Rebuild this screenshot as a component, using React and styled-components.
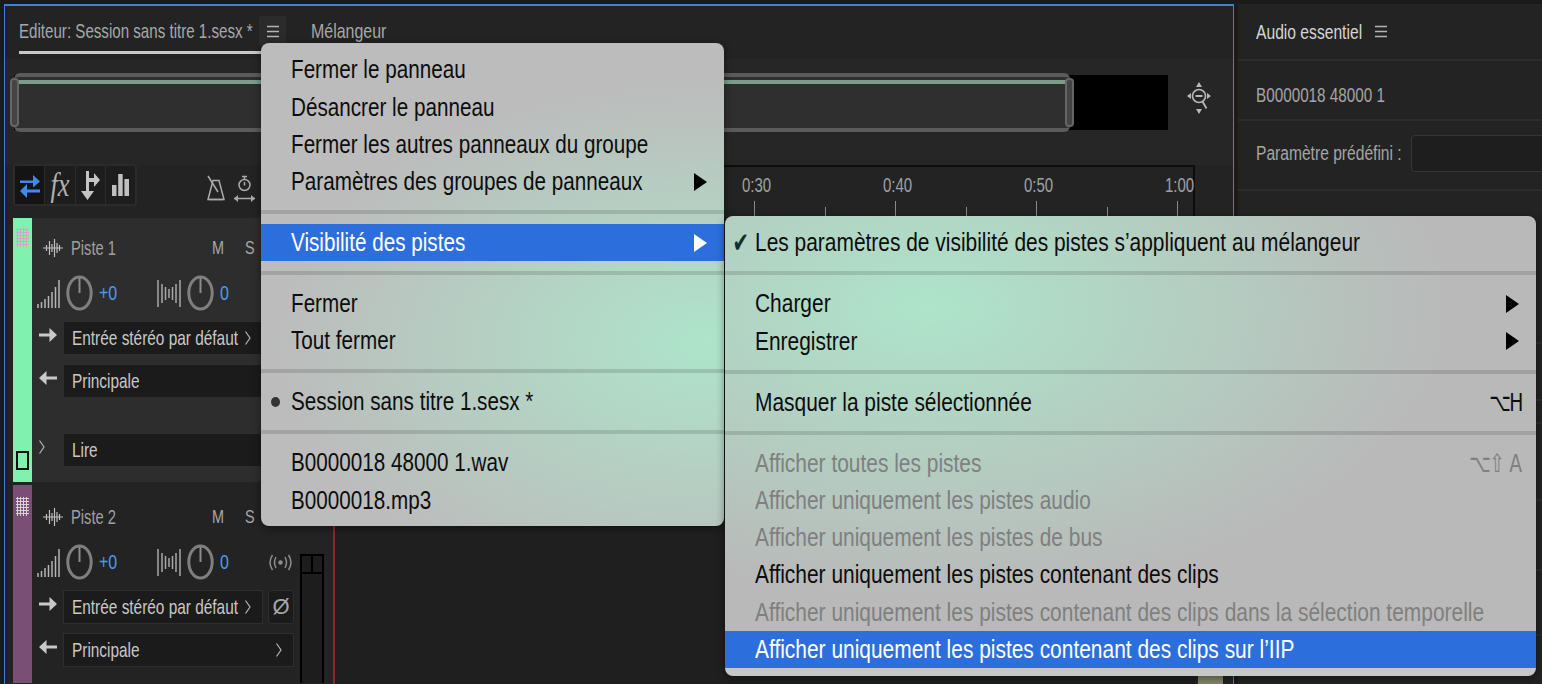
import styled, { createGlobalStyle, css } from "styled-components"

const GlobalStyle = createGlobalStyle`
  html, body {
    margin: 0;
    padding: 0;
    background: #1b1b1b;
  }
  body {
    font-family: "Liberation Sans", Arial, sans-serif;
    overflow: hidden;
  }
`

// the screenshot is squeezed horizontally, so all the text is too
const squeezed = css`
  display: inline-block;
  white-space: nowrap;
  transform-origin: left center;
  transform: scaleX(${(props) => props.$scale || 0.8});
`

const mainItems = [
  { label: "Fermer le panneau" },
  { label: "Désancrer le panneau" },
  { label: "Fermer les autres panneaux du groupe" },
  { label: "Paramètres des groupes de panneaux", arrow: true },
  { separator: true },
  { label: "Visibilité des pistes", arrow: true, active: true },
  { separator: true },
  { label: "Fermer" },
  { label: "Tout fermer" },
  { separator: true },
  { label: "Session sans titre 1.sesx *", bullet: true },
  { separator: true },
  { label: "B0000018 48000 1.wav" },
  { label: "B0000018.mp3" },
]

const subItems = [
  { label: "Les paramètres de visibilité des pistes s’appliquent au mélangeur", check: true },
  { separator: true },
  { label: "Charger", arrow: true },
  { label: "Enregistrer", arrow: true },
  { separator: true },
  { label: "Masquer la piste sélectionnée", shortcut: "⌥H" },
  { separator: true },
  { label: "Afficher toutes les pistes", disabled: true, shortcut: "⌥⇧A" },
  { label: "Afficher uniquement les pistes audio", disabled: true },
  { label: "Afficher uniquement les pistes de bus", disabled: true },
  { label: "Afficher uniquement les pistes contenant des clips" },
  { label: "Afficher uniquement les pistes contenant des clips dans la sélection temporelle", disabled: true },
  { label: "Afficher uniquement les pistes contenant des clips sur l’IIP", active: true },
]

const rulerMarks = ["0:30", "0:40", "0:50", "1:00"]
const sideRowHeights = [153, 57, 23, 77, 70, 65]

function HamburgerIcon() {
  return (
    <svg width="12" height="13" viewBox="0 0 12 13">
      <path d="M0 1.500h12M0 6.500h12M0 11.500h12" stroke="#b4b4b4" strokeWidth="1.500" />
    </svg>
  )
}

function SwapIcon() {
  return (
    <svg width="22" height="26" viewBox="0 0 22 26">
      <path d="M1 8.500h13V3l7 6.500-7 6V11H1zM21 17.500H8V12l-7 7 7 7v-5.500h13z" fill="#3d8bec" />
    </svg>
  )
}

function RouteIcon() {
  return (
    <svg width="20" height="29" viewBox="0 0 20 29">
      <path d="M6 0h3v20h5l-6.500 9L1 20h5zM9 7h5V2l6 7-6 7v-5H9z" fill="#c4c4c4" />
    </svg>
  )
}

function BarsIcon() {
  return (
    <svg width="17" height="22" viewBox="0 0 17 22">
      <path d="M0 11h4.500v11H0zM6.200 0h4.500v22H6.200zM12.400 5H17v17h-4.600z" fill="#c0c0c0" />
    </svg>
  )
}

function MetronomeIcon() {
  return (
    <svg width="18" height="26" viewBox="0 0 18 26">
      <path d="M6 5.500h6l5 19H1z" fill="none" stroke="#aaa" strokeWidth="1.500" />
      <path d="M1 1l10 16M2 24.500h14" stroke="#aaa" strokeWidth="1.500" />
    </svg>
  )
}

function TimerIcon() {
  return (
    <svg width="21" height="28" viewBox="0 0 21 28">
      <circle cx="10.500" cy="10" r="5.500" fill="none" stroke="#aaa" strokeWidth="1.500" />
      <path d="M8 1.500h5M10.500 2v2.500M10.500 7v3.500M0 23.500h21" stroke="#aaa" strokeWidth="1.500" />
      <path d="M0 23.500l4-3.500v7zM21 23.500l-4-3.500v7z" fill="#aaa" />
    </svg>
  )
}

function ZoomIcon() {
  return (
    <svg width="26" height="34" viewBox="0 0 26 34">
      <circle cx="13" cy="15" r="6.500" fill="none" stroke="#b8b8b8" strokeWidth="1.600" />
      <path d="M9.500 15h7M16.500 20.500l4 7" stroke="#b8b8b8" strokeWidth="1.800" />
      <path d="M13 1l3 5h-6zM1 15l4-3v6zM25 15l-4-3v6zM10 28h6l-3 5z" fill="#b8b8b8" />
    </svg>
  )
}

function WaveIcon() {
  return (
    <svg width="20" height="20" viewBox="0 0 20 20">
      <path
        d="M0 10h20M3.500 7v6M6.500 3v14M9 6v8M11.500 1v18M14 5v10M16.500 7v6"
        stroke="#c0c0c0"
        strokeWidth="1.200"
      />
    </svg>
  )
}

function GainIcon() {
  return (
    <svg width="23" height="29" viewBox="0 0 23 29">
      <path
        d="M1 29v-4M4.500 29v-6M8 29v-9M11.500 29v-12M15 29v-16M18.500 29V8M22 29V1"
        stroke="#b5b5b5"
        strokeWidth="1.500"
      />
    </svg>
  )
}

function PanIcon() {
  return (
    <svg width="24" height="27" viewBox="0 0 24 27">
      <path
        d="M1 0v27M5 4v19M8.500 7v13M12 9v9M15.500 7v13M19 4v19M23 0v27"
        stroke="#a8a8a8"
        strokeWidth="1.500"
      />
    </svg>
  )
}

function KnobIcon() {
  return (
    <svg width="27" height="36" viewBox="0 0 27 36">
      <ellipse cx="13.500" cy="18" rx="11.700" ry="16" fill="none" stroke="#7f7f7f" strokeWidth="3" />
      <path d="M13.500 3v15" stroke="#8c8c8c" strokeWidth="2" />
    </svg>
  )
}

function ArrowIcon({ left }) {
  return (
    <svg width="18" height="16" viewBox="0 0 18 16" style={left ? { transform: "scaleX(-1)" } : undefined}>
      <path d="M0 6.500h10.500V1l7.500 7-7.500 7V9.500H0z" fill="#c9c9c9" />
    </svg>
  )
}

function ChevronIcon() {
  return (
    <svg width="6" height="14" viewBox="0 0 6 14">
      <path d="M0.500 0.500L5 7l-4.500 6.500" fill="none" stroke="#b5b5b5" strokeWidth="1.200" />
    </svg>
  )
}

function RadioIcon() {
  return (
    <svg width="23" height="17" viewBox="0 0 23 17">
      <circle cx="11.500" cy="8.500" r="2.200" fill="#8d8d8d" />
      <path
        d="M7 3q-3 5.500 0 11M16 3q3 5.500 0 11M3.500 1q-5 7.500 0 15M19.500 1q5 7.500 0 15"
        fill="none"
        stroke="#8d8d8d"
        strokeWidth="1.500"
      />
    </svg>
  )
}

function Track({ name, color, dots, gripTop, top, bare, showRead, bg }) {
  return (
    <TrackRow $bg={bg}>
      <ColorStrip $color={color}>
        <Grip $dots={dots} $top={gripTop} />
        {showRead && <SelectBox />}
      </ColorStrip>
      <TrackBody $top={top}>
        <TrackHead>
          <WaveIcon />
          <TrackName>{name}</TrackName>
          <MuteLetter $x={212}>M</MuteLetter>
          <MuteLetter $x={245}>S</MuteLetter>
        </TrackHead>
        <KnobRow>
          <GainIcon />
          <KnobIcon />
          <BlueValue $width={52}>+0</BlueValue>
          <PanIcon />
          <KnobIcon />
          <BlueValue $width={43}>0</BlueValue>
          {bare && <RadioIcon />}
        </KnobRow>
        <RouteRow>
          <ArrowSlot>
            <ArrowIcon />
          </ArrowSlot>
          <Dropdown $width={200}>
            <DropLabel>Entrée stéréo par défaut</DropLabel>
            <ChevronIcon />
          </Dropdown>
          <PhaseButton>Ø</PhaseButton>
        </RouteRow>
        <RouteRow $top={9}>
          <ArrowSlot>
            <ArrowIcon left />
          </ArrowSlot>
          <Dropdown $width={231}>
            <DropLabel>Principale</DropLabel>
            <ChevronIcon />
          </Dropdown>
        </RouteRow>
        {showRead && (
          <RouteRow $top={35}>
            <ArrowSlot>
              <ChevronIcon />
            </ArrowSlot>
            <Dropdown $width={231}>
              <DropLabel>Lire</DropLabel>
              <ChevronIcon />
            </Dropdown>
          </RouteRow>
        )}
      </TrackBody>
      {bare && (
        <Meter>
          <MeterHead />
        </Meter>
      )}
    </TrackRow>
  )
}

function MenuList({ items, scale }) {
  return items.map((item, i) =>
    item.separator ? (
      <MenuSeparator key={i} />
    ) : (
      <MenuItem key={i} $active={item.active} $disabled={item.disabled}>
        {item.bullet && <Bullet />}
        {item.check && <CheckMark>✔</CheckMark>}
        <MenuLabel $scale={scale}>{item.label}</MenuLabel>
        {item.arrow && <MenuArrow $active={item.active} />}
        {item.shortcut && (
          <Shortcut>
            {[...item.shortcut].map((key) => (
              <ShortcutKey key={key}>{key}</ShortcutKey>
            ))}
          </Shortcut>
        )}
      </MenuItem>
    )
  )
}

export default function App() {
  return (
    <Page>
      <GlobalStyle />
      <Editor>
        <TabBar>
          <Tab>
            <TabLabel $scale={0.72}>Editeur: Session sans titre 1.sesx *</TabLabel>
          </Tab>
          <TabMenuButton>
            <HamburgerIcon />
          </TabMenuButton>
          <SecondTab $scale={0.76}>Mélangeur</SecondTab>
        </TabBar>
        <OverviewRow>
          <Overview>
            <OverviewBar />
          </Overview>
          <ZoomSlot>
            <ZoomIcon />
          </ZoomSlot>
        </OverviewRow>
        <Workspace>
          <TrackColumn>
            <Toolbar>
              <ToolGroup>
                <ToolButton $on>
                  <SwapIcon />
                </ToolButton>
                <ToolButton>
                  <FxLabel>fx</FxLabel>
                </ToolButton>
                <ToolButton>
                  <RouteIcon />
                </ToolButton>
                <ToolButton>
                  <BarsIcon />
                </ToolButton>
              </ToolGroup>
              <ToolIcons>
                <MetronomeIcon />
                <TimerIcon />
              </ToolIcons>
            </Toolbar>
            <Track name="Piste 1" color="#80f1ae" dots="#d8a3c4" gripTop={10} bg="#2d2d2d" top={15} showRead />
            <Track name="Piste 2" color="#7b4f75" dots="#d5d5d5" gripTop={12} bg="#232323" top={17} bare />
          </TrackColumn>
          <Timeline>
            <Ruler>
              {rulerMarks.map((mark) => (
                <RulerMark key={mark}>
                  <RulerText $scale={0.75}>{mark}</RulerText>
                </RulerMark>
              ))}
            </Ruler>
          </Timeline>
          <ScrollGutter>
            <ScrollThumb />
          </ScrollGutter>
        </Workspace>
      </Editor>
      <SidePanel>
        <SideHead>
          <SideTitle $scale={0.745}>Audio essentiel</SideTitle>
          <HamburgerIcon />
        </SideHead>
        <SideRow $height={60} $pad={11}>
          <SideText $scale={0.763}>B0000018 48000 1</SideText>
        </SideRow>
        <SideRow $height={70} $under={3}>
          <SideText $scale={0.78}>Paramètre prédéfini :</SideText>
          <PresetInput />
        </SideRow>
        {sideRowHeights.map((height, i) => (
          <SideRow key={i} $height={height} />
        ))}
      </SidePanel>
      <MainMenu>
        <MenuList items={mainItems} scale={0.795} />
      </MainMenu>
      <SubMenu>
        <MenuList items={subItems} scale={0.805} />
      </SubMenu>
    </Page>
  )
}

const Page = styled.div`
  position: relative;
  display: flex;
  width: 1542px;
  height: 684px;
  overflow: hidden;
  padding-top: 4px;
  padding-left: 4px;
  box-sizing: border-box;
`
const Editor = styled.div`
  width: 1230px;
  flex: none;
  box-sizing: border-box;
  border: 1px solid #3d82d8;
  border-top-width: 2px;
  border-bottom: none;
  background: #232323;
  display: flex;
  flex-direction: column;
`
const TabBar = styled.div`
  height: 53px;
  flex: none;
  display: flex;
  align-items: flex-start;
  padding-left: 14px;
  box-sizing: border-box;
`
const Tab = styled.div`
  width: 243px;
  height: 45px;
  border-bottom: 3px solid #c8c8c8;
  flex: none;
`
const TabLabel = styled.span`
  ${squeezed};
  font-size: 21px;
  line-height: 50px;
  color: #a8a8a8;
`
const SecondTab = styled(TabLabel)`
  margin-left: 25px;
`
const TabMenuButton = styled.div`
  width: 27px;
  height: 30px;
  margin: 10px 0 0 -3px;
  background: #2b2b2b;
  border-radius: 3px;
  display: flex;
  align-items: center;
  justify-content: center;
  flex: none;
`
const OverviewRow = styled.div`
  height: 106px;
  flex: none;
  display: flex;
  align-items: flex-start;
  padding: 16px 0 0 9px;
  box-sizing: border-box;
  background: #262626;
`
const Overview = styled.div`
  width: 1154px;
  height: 55px;
  background: #000;
`
const OverviewBar = styled.div`
  position: relative;
  width: 1056px;
  height: 59px;
  margin-top: -2px;
  box-sizing: border-box;
  border-top: 4px solid #5b5b5b;
  border-bottom: 4px solid #5b5b5b;
  border-radius: 6px;
  background: linear-gradient(#2f2f2f 3px, #7b9e8c 3px, #7b9e8c 7px, #2f2f2f 7px);
  background-origin: padding-box;
  &::before,
  &::after {
    content: "";
    position: absolute;
    top: 1px;
    bottom: 1px;
    width: 5px;
    border: 2px solid #666;
    border-radius: 4px;
    background: #444;
  }
  &::before {
    left: -4px;
  }
  &::after {
    right: -4px;
  }
`
const ZoomSlot = styled.div`
  margin: 6px 0 0 18px;
`
const Workspace = styled.div`
  flex: 1;
  min-height: 0;
  display: flex;
`
const TrackColumn = styled.div`
  width: 320px;
  margin-left: 8px;
  flex: none;
  display: flex;
  flex-direction: column;
`
const Toolbar = styled.div`
  height: 53px;
  flex: none;
  display: flex;
  align-items: flex-start;
`
const ToolGroup = styled.div`
  display: flex;
  height: 42px;
  margin-top: -1px;
  border-radius: 4px;
  overflow: hidden;
  background: #2b2b2b;
  padding: 2px;
  gap: 1px;
  box-sizing: border-box;
`
const ToolButton = styled.div`
  width: 29.25px;
  background: ${(props) => (props.$on ? "#141414" : "#1d1d1d")};
  display: flex;
  align-items: center;
  justify-content: center;
`
const FxLabel = styled.span`
  font-family: "Liberation Serif", serif;
  font-style: italic;
  font-size: 33px;
  line-height: 33px;
  color: #b0b0b0;
  transform: scaleX(0.8);
`
const ToolIcons = styled.div`
  display: flex;
  gap: 9px;
  margin: 10px 0 0 70px;
`
const TrackRow = styled.div`
  display: flex;
  background: ${(props) => props.$bg};
  margin-bottom: 3px;
  flex: none;
  min-height: 198px;
`
const ColorStrip = styled.div`
  position: relative;
  width: 19px;
  flex: none;
  background: ${(props) => props.$color};
`
const Grip = styled.div`
  width: 13px;
  height: 19px;
  margin: ${(props) => props.$top}px 0 0 3px;
  background-image: radial-gradient(${(props) => props.$dots} 1px, transparent 1.2px);
  background-size: 3px 3px;
`
const SelectBox = styled.div`
  position: absolute;
  left: 3px;
  bottom: 12px;
  width: 9px;
  height: 15px;
  border: 2px solid #111;
`
const TrackBody = styled.div`
  width: 262px;
  flex: none;
  padding: ${(props) => props.$top}px 0 15px 5px;
  box-sizing: border-box;
`
const TrackHead = styled.div`
  position: relative;
  height: 30px;
  padding-left: 6px;
  display: flex;
  align-items: center;
  gap: 8px;
`
const TrackName = styled.span`
  ${squeezed};
  transform: scaleX(0.7);
  font-size: 21px;
  color: #a0a0a0;
`
const MuteLetter = styled.span`
  ${squeezed};
  position: absolute;
  left: ${(props) => props.$x - 37}px;
  top: 5px;
  font-size: 18px;
  color: #a8a8a8;
`
const KnobRow = styled.div`
  height: 30px;
  margin-top: 15px;
  display: flex;
  align-items: center;
  gap: 6px;
`
const BlueValue = styled.span`
  ${squeezed};
  width: ${(props) => props.$width}px;
  flex: none;
  font-size: 20px;
  color: #4a9bf0;
`
const RouteRow = styled.div`
  height: 34px;
  margin-top: ${(props) => props.$top || 13}px;
  display: flex;
  align-items: center;
`
const ArrowSlot = styled.div`
  width: 26px;
  flex: none;
  display: flex;
  padding: 0 0 7px 2px;
  box-sizing: border-box;
`
const Dropdown = styled.div`
  width: ${(props) => props.$width}px;
  height: 100%;
  flex: none;
  box-sizing: border-box;
  background: #1b1b1b;
  border: 1px solid #2e2e2e;
  display: flex;
  align-items: center;
  justify-content: space-between;
  padding: 0 11px 0 8px;
`
const DropLabel = styled.span`
  ${squeezed};
  transform: scaleX(0.733);
  width: 0;
  font-size: 21px;
  color: #c8c8c8;
`
const PhaseButton = styled.div`
  width: 26px;
  height: 100%;
  margin-left: 5px;
  flex: none;
  box-sizing: border-box;
  border: 1px solid #2e2e2e;
  border-radius: 3px;
  background: #1b1b1b;
  color: #a5a5a5;
  font-size: 22px;
  display: flex;
  align-items: center;
  justify-content: center;
`
const Meter = styled.div`
  width: 24px;
  margin: 69px 0 0 6px;
  flex: none;
  box-sizing: border-box;
  border: 2px solid #000;
  border-bottom: none;
  background: #1d1d1d;
`
const MeterHead = styled.div`
  height: 16px;
  border-bottom: 2px solid #000;
  background: linear-gradient(90deg, transparent 9px, #000 9px, #000 11px, transparent 11px);
`
const Timeline = styled.div`
  flex: none;
  width: 862px;
  box-sizing: border-box;
  background: #1f1f1f;
  border-left: 2px solid #8a2b2b;
  position: relative;
`
const Ruler = styled.div`
  height: 52px;
  box-sizing: border-box;
  border-top: 2px solid #0d0d0d;
  border-right: 2px solid #0d0d0d;
  background: #232323;
  display: flex;
  justify-content: flex-end;
`
const RulerMark = styled.div`
  width: 141px;
  flex: none;
  position: relative;
  &:last-child {
    margin-right: 15px;
  }
  &::after {
    content: "";
    position: absolute;
    right: 0;
    bottom: 0;
    height: 16px;
    border-right: 1px solid #8a8a8a;
  }
  &::before {
    content: "";
    position: absolute;
    left: 70px;
    bottom: 0;
    height: 10px;
    border-right: 1px solid #8a8a8a;
  }
`
const RulerText = styled.span`
  ${squeezed};
  position: absolute;
  right: -33px;
  width: 46px;
  top: 7px;
  font-size: 20px;
  color: #a0a0a0;
`
const ScrollGutter = styled.div`
  flex: 1;
  display: flex;
  align-items: flex-end;
  padding-left: 3px;
`
const ScrollThumb = styled.div`
  width: 25px;
  height: 14px;
  background: #85856a;
`
const SidePanel = styled.div`
  flex: 1;
  min-width: 0;
  background: #232323;
  margin-left: 4px;
`
const SideHead = styled.div`
  height: 57px;
  box-sizing: border-box;
  border-bottom: 2px solid #2c2c2c;
  display: flex;
  align-items: center;
  padding-left: 18px;
  gap: 119px;
`
const SideTitle = styled.span`
  ${squeezed};
  width: 0;
  font-size: 21px;
  color: #d5d5d5;
`
const SideRow = styled.div`
  height: ${(props) => props.$height}px;
  box-sizing: border-box;
  border-bottom: 2px solid #2c2c2c;
  display: flex;
  align-items: center;
  padding: ${(props) => props.$pad || 0}px 0 ${(props) => props.$under || 0}px 18px;
  gap: 155px;
`
const SideText = styled.span`
  ${squeezed};
  width: 0;
  font-size: 20px;
  color: #a5a5a5;
`
const PresetInput = styled.div`
  flex: 1;
  height: 37px;
  box-sizing: border-box;
  border: 1px solid #353535;
  border-right: none;
  border-radius: 4px 0 0 4px;
  background: #1e1e1e;
`
const Menu = styled.div`
  position: absolute;
  box-sizing: border-box;
  border-radius: 8px;
  box-shadow: 0 2px 8px rgba(0, 0, 0, 0.45);
  padding-top: 8.25px;
`
const MainMenu = styled(Menu)`
  left: 261px;
  top: 43px;
  width: 463px;
  height: 483px;
  background:
    radial-gradient(ellipse 430px 260px at 96% 62%, #aee4ca 0%, #aee4ca00 100%),
    #bcbcbc;
`
const SubMenu = styled(Menu)`
  left: 725px;
  top: 216px;
  width: 811px;
  height: 460px;
  background:
    linear-gradient(to top, #c6c8c7 8px, transparent 8px),
    radial-gradient(ellipse 520px 290px at 25% 20%, #aee4ca 0%, #aee4ca00 100%),
    #b9b9b9;
`
const MenuItem = styled.div`
  position: relative;
  height: 37.25px;
  padding: 0 17px 0 30px;
  display: flex;
  align-items: center;
  justify-content: space-between;
  background: ${(props) => (props.$active ? "#2c6fdc" : "transparent")};
  color: ${(props) =>
    props.$active ? "#fff" : props.$disabled ? "#7f807f" : "#0d0d0d"};
`
const MenuLabel = styled.span`
  ${squeezed};
  width: 0;
  font-size: 26px;
`
const MenuSeparator = styled.div`
  height: 23.75px;
  display: flex;
  align-items: center;
  &::after {
    content: "";
    flex: 1;
    height: 4px;
    background: rgba(0, 0, 0, 0.13);
  }
`
const MenuArrow = styled.span`
  width: 0;
  height: 0;
  border-left: 13px solid ${(props) => (props.$active ? "#fff" : "#000")};
  border-top: 9px solid transparent;
  border-bottom: 9px solid transparent;
`
const Bullet = styled.span`
  position: absolute;
  left: 10px;
  top: 14px;
  width: 9px;
  height: 10px;
  border-radius: 50%;
  background: #333;
`
const CheckMark = styled.span`
  position: absolute;
  left: 4px;
  font-family: "DejaVu Sans", sans-serif;
  font-size: 28px;
  color: #12302a;
  transform: scaleX(0.7);
`
const Shortcut = styled.span`
  margin-left: auto;
  margin-right: -5px;
  display: flex;
  gap: 3px;
`
const ShortcutKey = styled.span`
  width: 17px;
  text-align: center;
  font-family: "DejaVu Sans", sans-serif;
  font-size: 25px;
  transform: scaleX(0.75);
`
